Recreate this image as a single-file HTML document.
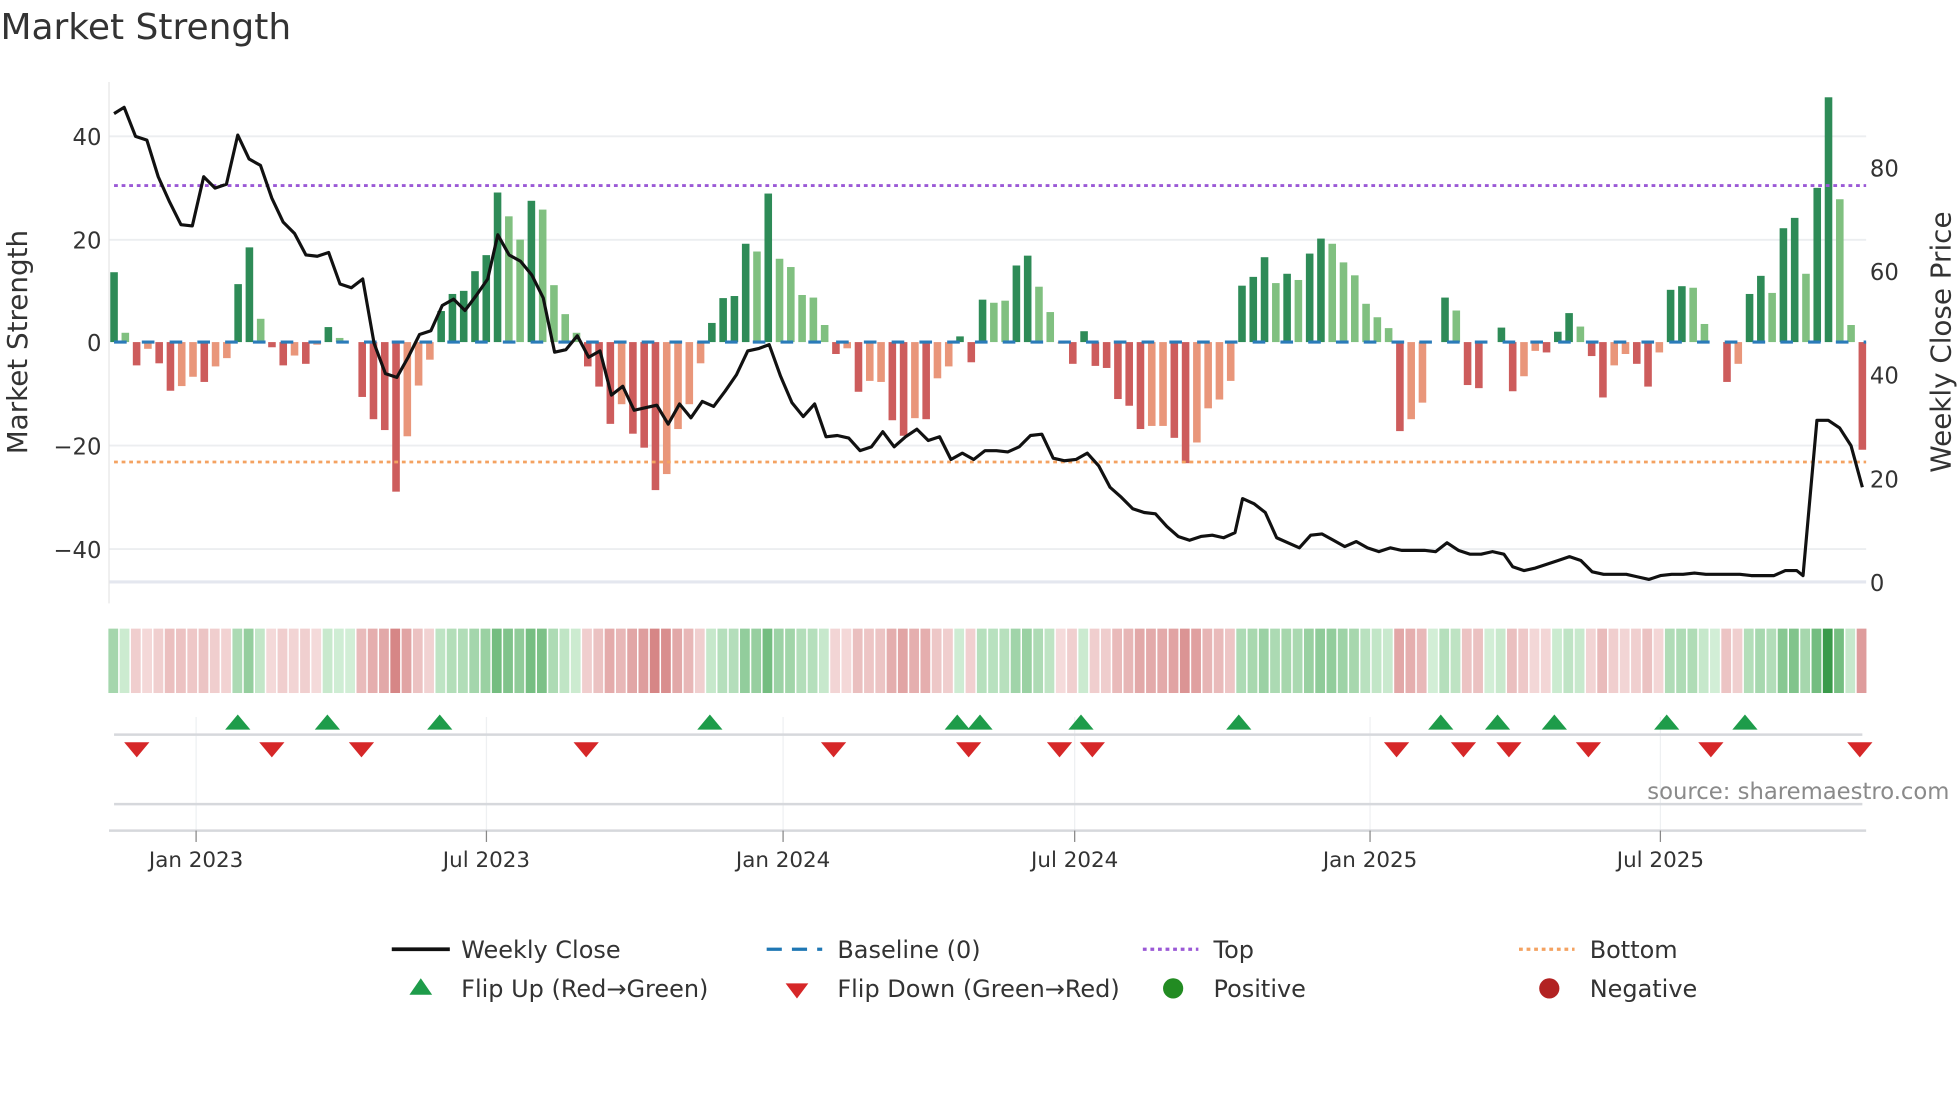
<!DOCTYPE html>
<html><head><meta charset="utf-8">
<style>
html,body{margin:0;padding:0;background:#fff;}
svg{display:block;}
text{font-family:"DejaVu Sans","Liberation Sans",sans-serif;}
</style></head>
<body>
<svg id="s" width="1960" height="1102" viewBox="0 0 1552 873" xmlns="http://www.w3.org/2000/svg">
<rect width="1552" height="873" fill="#fff"/>
<text x="0" y="31" font-size="28.5" fill="#333">Market Strength</text>
<g id="grid"></g>
<g id="bars"></g>
<g id="strip"></g>
<g id="marks"></g>
<g id="fg"></g>
<text x="1544" y="633" font-size="18" fill="#8a8a8a" text-anchor="end">source: sharemaestro.com</text>
<!-- legend -->
<g font-size="19" fill="#333">
<line x1="310" y1="752" x2="356" y2="752" stroke="#111" stroke-width="3"/>
<text x="365" y="759">Weekly Close</text>
<line x1="607" y1="752" x2="651" y2="752" stroke="#1f77b4" stroke-width="2.5" stroke-dasharray="12,8"/>
<text x="663" y="759">Baseline (0)</text>
<line x1="905" y1="752" x2="949" y2="752" stroke="#9b59d6" stroke-width="2.5" stroke-dasharray="3,3"/>
<text x="961" y="759">Top</text>
<line x1="1203" y1="752" x2="1247" y2="752" stroke="#f4a261" stroke-width="2.5" stroke-dasharray="3,3"/>
<text x="1259" y="759">Bottom</text>
<polygon points="324,788 342,788 333,775" fill="#1e9c4a"/>
<text x="365" y="790">Flip Up (Red→Green)</text>
<polygon points="622,779 640,779 631,791" fill="#d62728"/>
<text x="663" y="790">Flip Down (Green→Red)</text>
<circle cx="929" cy="783" r="8" fill="#228b22"/>
<text x="961" y="790">Positive</text>
<circle cx="1227" cy="783" r="8" fill="#b22222"/>
<text x="1259" y="790">Negative</text>
</g>
</svg>
<script>
const NS="http://www.w3.org/2000/svg";
function el(p,t,a,txt){const e=document.createElementNS(NS,t);for(const k in a)e.setAttribute(k,a[k]);if(txt!==undefined)e.textContent=txt;document.getElementById(p).appendChild(e);return e;}
const Y0=271,U=4.1;
[108,190,353,435].forEach(y=>el('grid','line',{x1:86,x2:1478,y1:y,y2:y,stroke:'#eceef0','stroke-width':1.5}));
el('grid','line',{x1:86,x2:1478,y1:461,y2:461,stroke:'#e4e7ef','stroke-width':2.5});
el('grid','line',{x1:86,x2:86,y1:65,y2:478,stroke:'#e6e6e6','stroke-width':1});
[['40',108],['20',190],['0',271],['−20',353],['−40',435]].forEach(a=>el('grid','text',{x:80,y:a[1]+7,'font-size':18,fill:'#333','text-anchor':'end'},a[0]));
[['80',133],['60',215],['40',297],['20',379],['0',461]].forEach(a=>el('grid','text',{x:1481,y:a[1]+7,'font-size':18,fill:'#333'},a[0]));
el('grid','text',{x:0,y:0,'font-size':22,fill:'#333','text-anchor':'middle',transform:'translate(21,271) rotate(-90)'},'Market Strength');
el('grid','text',{x:0,y:0,'font-size':22,fill:'#333','text-anchor':'middle',transform:'translate(1545,271) rotate(-90)'},'Weekly Close Price');
const B="D13.5,L1.8,R-4.5,S-1.3,R-4.1,R-9.4,S-8.5,S-6.7,R-7.7,S-4.7,S-3.1,D11.2,D18.3,L4.5,R-1,R-4.5,S-2.6,R-4.2,S-0.5,D2.9,L0.8,Z0,R-10.6,R-14.9,R-17,R-28.9,S-18.2,S-8.4,S-3.4,D6,D9.3,D9.9,D13.7,D16.8,D28.9,L24.3,L19.8,D27.3,L25.6,L11,L5.4,L1.8,R-4.7,R-8.6,R-15.8,S-12,R-17.7,R-20.4,R-28.6,S-25.5,S-16.8,S-12,S-4.1,D3.7,D8.5,D8.9,D19,L17.5,D28.7,L16.1,L14.5,L9.1,L8.6,L3.3,R-2.3,S-1.2,R-9.6,S-7.5,S-7.7,R-15.1,R-18.1,S-14.7,R-14.9,S-7,S-4.7,D1.1,R-3.9,D8.2,L7.6,L8,D14.8,D16.7,L10.7,L5.8,S-0.3,R-4.2,D2.1,R-4.6,R-5,R-11,R-12.3,R-16.8,S-16.2,S-16.2,R-18.5,R-23.4,S-19.4,S-12.8,S-11.1,S-7.5,D10.9,D12.6,D16.4,L11.4,D13.2,L12,D17.1,D20,L19,L15.4,L12.9,L7.4,L4.8,L2.7,R-17.2,S-14.9,S-11.7,Z0,D8.6,L6.1,R-8.3,R-8.9,Z0,D2.8,R-9.5,S-6.6,S-1.7,R-2,D2,D5.6,L3,R-2.7,R-10.7,S-4.5,S-2.3,R-4.2,R-8.6,S-2,D10.1,D10.8,L10.5,L3.5,Z0,R-7.7,S-4.2,D9.3,D12.8,L9.5,D22,D24,L13.2,D29.8,D47.3,L27.6,L3.3,R-20.8".split(',');
const N=B.length,X0=90,DX=(1475-90)/(N-1);
const col={D:'#2e8b57',L:'#80c080',R:'#cd5c5c',S:'#e9967a',Z:'#fff'};
function mix(a,b,t){const h=s=>[1,3,5].map(i=>parseInt(s.substr(i,2),16));const A=h(a),C=h(b);return 'rgb('+A.map((v,i)=>Math.round(v+(C[i]-v)*t)).join(',')+')';}
B.forEach((s,i)=>{const c=s[0],v=parseFloat(s.slice(1));const x=X0+i*DX;
 if(v!==0){const y=v>0?Y0-v*U:Y0;el('bars','rect',{x:x-3,y:y,width:6,height:Math.abs(v)*U,fill:col[c]});}
 let f;if(v>=0){f=v>35?'#3a9a4a':mix('#d2eed6','#74bd80',Math.min(v/28,1));}else f=mix('#f5dcdc','#d68686',Math.min(-v/28,1));
 el('strip','rect',{x:x-4.5,y:498,width:DX-1.2,height:51,fill:f});
});
el('fg','line',{x1:90,x2:1478,y1:Y0,y2:Y0,stroke:'#2b7bb9','stroke-width':2.5,'stroke-dasharray':'10,12'});
el('fg','line',{x1:90,x2:1478,y1:147,y2:147,stroke:'#9b59d6','stroke-width':2.2,'stroke-dasharray':'3,3'});
el('fg','line',{x1:90,x2:1478,y1:366,y2:366,stroke:'#f4a261','stroke-width':2.2,'stroke-dasharray':'3,3'});
const P="90,90 98,85 107,108 116,111 125,140 134,160 143,178 152,179 161,140 170,149 179,146 188,107 197,126 206,131 215,157 224,176 233,185 242,202 251,203 260,200 269,225 278,228 287,221 296,272 305,296 314,299 323,283 332,265 341,262 350,242 359,237 368,246 377,234 386,221 394,186 403,202 412,207 421,218 430,236 439,279 448,277 457,266 466,283 475,278 484,313 493,306 502,325 511,323 520,321 529,336 538,320 547,331 556,318 565,322 574,310 583,297 592,278 601,276 609,273 618,298 627,319 636,330 645,320 654,346 663,345 672,347 681,357 690,354 699,342 708,354 717,346 726,340 735,349 744,346 753,364 762,359 771,364 780,357 789,357 798,358 807,354 816,345 825,344 834,363 843,365 852,364 861,359 870,369 879,386 888,394 897,403 906,406 915,407 924,417 933,425 942,428 951,425 960,424 969,426 978,422 984,395 993,399 1002,406 1011,426 1020,430 1029,434 1038,424 1047,423 1056,428 1065,433 1074,429 1083,434 1092,437 1101,434 1110,436 1119,436 1128,436 1137,437 1146,430 1155,436 1164,439 1173,439 1182,437 1191,439 1198,449 1207,452 1216,450 1225,447 1234,444 1243,441 1252,444 1261,453 1270,455 1279,455 1288,455 1297,457 1306,459 1315,456 1324,455 1333,455 1342,454 1351,455 1360,455 1369,455 1378,455 1387,456 1396,456 1405,456 1414,452 1423,452 1428,456 1439,333 1448,333 1457,339 1466,353 1475,386";
el('fg','polyline',{points:P,fill:'none',stroke:'#111','stroke-width':2.5,'stroke-linejoin':'round'});
[155,385,620,851,1085,1315].forEach(x=>el('marks','line',{x1:x,x2:x,y1:568,y2:658,stroke:'#eef0f2','stroke-width':1}));
el('marks','line',{x1:90,x2:1475,y1:582,y2:582,stroke:'#d6d8dc','stroke-width':2});
el('marks','line',{x1:90,x2:1475,y1:637,y2:637,stroke:'#d6d8dc','stroke-width':2});
el('marks','line',{x1:86,x2:1478,y1:658,y2:658,stroke:'#d6d8dc','stroke-width':2});
[['Jan 2023',155],['Jul 2023',385],['Jan 2024',620],['Jul 2024',851],['Jan 2025',1085],['Jul 2025',1315]].forEach(a=>{
 el('marks','line',{x1:a[1],x2:a[1],y1:658,y2:667,stroke:'#888','stroke-width':1});
 el('marks','text',{x:a[1],y:687,'font-size':17,fill:'#333','text-anchor':'middle'},a[0]);});
[188,259,348,562,758,776,856,981,1141,1186,1231,1320,1382].forEach(x=>el('marks','polygon',{points:(x-10)+',578 '+(x+10)+',578 '+x+',566',fill:'#1e9c4a'}));
[108,215,286,464,660,767,839,865,1106,1159,1195,1258,1355,1473].forEach(x=>el('marks','polygon',{points:(x-10)+',588 '+(x+10)+',588 '+x+',600',fill:'#d62728'}));
</script>
</body></html>
